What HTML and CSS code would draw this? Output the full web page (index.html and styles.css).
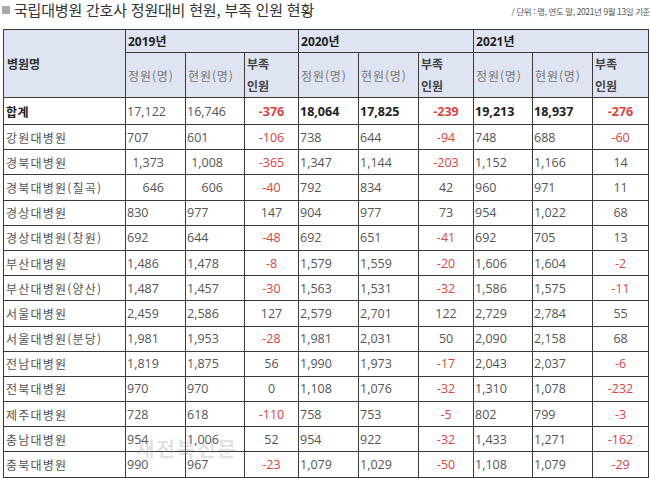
FILE: index.html
```html
<!DOCTYPE html>
<html lang="ko">
<head>
<meta charset="utf-8">
<link rel="stylesheet" href="styles.css">
</head>
<body>
<div class="page">
  <div class="top">
    <h1 class="title"><span class="sq"></span>국립대병원 간호사 정원대비 현원, 부족 인원 현황</h1>
    <span class="note">/ 단위 : 명, 연도 말, 2021년 9월 13일 기준</span>
  </div>
  <table class="tbl">
    <colgroup>
      <col class="w-name"><col class="w60"><col class="w59"><col class="w54"><col class="w60"><col class="w60"><col class="w55"><col class="w59"><col class="w60"><col class="w56">
    </colgroup>
    <thead>
      <tr class="h1">
        <th rowspan="2" class="hname">병원명</th>
        <th colspan="3" class="year">2019년</th>
        <th colspan="3" class="year">2020년</th>
        <th colspan="3" class="year">2021년</th>
      </tr>
      <tr class="h2">
        <th class="sub">정원(명)</th><th class="sub">현원(명)</th><th class="lack">부족<br>인원</th>
        <th class="sub">정원(명)</th><th class="sub">현원(명)</th><th class="lack">부족<br>인원</th>
        <th class="sub">정원(명)</th><th class="sub">현원(명)</th><th class="lack">부족<br>인원</th>
      </tr>
    </thead>
    <tbody>
      <tr class="total">
        <td class="name b">합계</td><td class="l">17,122</td><td class="l">16,746</td><td class="c neg b">-376</td>
        <td class="l b">18,064</td><td class="l b">17,825</td><td class="c neg b">-239</td>
        <td class="l b">19,213</td><td class="l b">18,937</td><td class="c neg b">-276</td>
      </tr>
      <tr><td class="name">강원대병원</td><td class="l">707</td><td class="l">601</td><td class="c neg">-106</td><td class="l">738</td><td class="l">644</td><td class="c neg">-94</td><td class="l">748</td><td class="l">688</td><td class="c neg">-60</td></tr>
      <tr><td class="name">경북대병원</td><td class="r">1,373</td><td class="r">1,008</td><td class="c neg">-365</td><td class="l">1,347</td><td class="l">1,144</td><td class="c neg">-203</td><td class="l">1,152</td><td class="l">1,166</td><td class="c">14</td></tr>
      <tr><td class="name">경북대병원(칠곡)</td><td class="r">646</td><td class="r">606</td><td class="c neg">-40</td><td class="l">792</td><td class="l">834</td><td class="c">42</td><td class="l">960</td><td class="l">971</td><td class="c">11</td></tr>
      <tr><td class="name">경상대병원</td><td class="l">830</td><td class="l">977</td><td class="c">147</td><td class="l">904</td><td class="l">977</td><td class="c">73</td><td class="l">954</td><td class="l">1,022</td><td class="c">68</td></tr>
      <tr><td class="name">경상대병원(창원)</td><td class="l">692</td><td class="l">644</td><td class="c neg">-48</td><td class="l">692</td><td class="l">651</td><td class="c neg">-41</td><td class="l">692</td><td class="l">705</td><td class="c">13</td></tr>
      <tr><td class="name">부산대병원</td><td class="l">1,486</td><td class="l">1,478</td><td class="c neg">-8</td><td class="l">1,579</td><td class="l">1,559</td><td class="c neg">-20</td><td class="l">1,606</td><td class="l">1,604</td><td class="c neg">-2</td></tr>
      <tr><td class="name">부산대병원(양산)</td><td class="l">1,487</td><td class="l">1,457</td><td class="c neg">-30</td><td class="l">1,563</td><td class="l">1,531</td><td class="c neg">-32</td><td class="l">1,586</td><td class="l">1,575</td><td class="c neg">-11</td></tr>
      <tr><td class="name">서울대병원</td><td class="l">2,459</td><td class="l">2,586</td><td class="c">127</td><td class="l">2,579</td><td class="l">2,701</td><td class="c">122</td><td class="l">2,729</td><td class="l">2,784</td><td class="c">55</td></tr>
      <tr><td class="name">서울대병원(분당)</td><td class="l">1,981</td><td class="l">1,953</td><td class="c neg">-28</td><td class="l">1,981</td><td class="l">2,031</td><td class="c">50</td><td class="l">2,090</td><td class="l">2,158</td><td class="c">68</td></tr>
      <tr><td class="name">전남대병원</td><td class="l">1,819</td><td class="l">1,875</td><td class="c">56</td><td class="l">1,990</td><td class="l">1,973</td><td class="c neg">-17</td><td class="l">2,043</td><td class="l">2,037</td><td class="c neg">-6</td></tr>
      <tr><td class="name">전북대병원</td><td class="l">970</td><td class="l">970</td><td class="c">0</td><td class="l">1,108</td><td class="l">1,076</td><td class="c neg">-32</td><td class="l">1,310</td><td class="l">1,078</td><td class="c neg">-232</td></tr>
      <tr><td class="name">제주대병원</td><td class="l">728</td><td class="l">618</td><td class="c neg">-110</td><td class="l">758</td><td class="l">753</td><td class="c neg">-5</td><td class="l">802</td><td class="l">799</td><td class="c neg">-3</td></tr>
      <tr><td class="name">충남대병원</td><td class="l">954</td><td class="l">1,006</td><td class="c">52</td><td class="l">954</td><td class="l">922</td><td class="c neg">-32</td><td class="l">1,433</td><td class="l">1,271</td><td class="c neg">-162</td></tr>
      <tr><td class="name">충북대병원</td><td class="l">990</td><td class="l">967</td><td class="c neg">-23</td><td class="l">1,079</td><td class="l">1,029</td><td class="c neg">-50</td><td class="l">1,108</td><td class="l">1,079</td><td class="c neg">-29</td></tr>
    </tbody>
  </table>
  <div class="watermark" aria-hidden="true">새전북신문</div>
</div>
</body>
</html>
```
FILE: styles.css
```css
html, body {
  margin: 0;
  padding: 0;
  background: #ffffff;
}
.page {
  position: relative;
  width: 650px;
  height: 478px;
  overflow: hidden;
  font-family: "Open Sans", "Noto Sans CJK KR", sans-serif;
}
.top {
  height: 29px;
  display: flex;
  justify-content: space-between;
  align-items: flex-start;
}
.title {
  margin: 0;
  padding-left: 2px;
  font-family: "Noto Sans CJK KR", sans-serif;
  font-weight: 400;
  font-size: 15px;
  line-height: 20px;
  color: #333;
  display: flex;
  align-items: center;
  gap: 4px;
  letter-spacing: -0.2px;
}
.sq {
  display: inline-block;
  width: 8px;
  height: 8px;
  background: #a9a9a9;
}
.note {
  margin-top: 5px;
  font-family: "Noto Sans CJK KR", sans-serif;
  font-size: 8.5px;
  line-height: 12px;
  color: #555;
  letter-spacing: -0.4px;
  white-space: nowrap;
}
.tbl {
  margin-left: 3px;
  width: 645px;
  table-layout: fixed;
  border-collapse: collapse;
  border: 1px solid #333;
}
.w-name { width: 122px; }
.w60 { width: 60px; }
.w59 { width: 59px; }
.w56 { width: 56px; }
.w55 { width: 55px; }
.w54 { width: 54px; }
.tbl th, .tbl td {
  border: 1px solid #3a3a3a;
  padding: 0;
  white-space: nowrap;
  overflow: hidden;
}
.tbl th {
  background: #dee4f2;
  text-align: left;
  vertical-align: middle;
  font-size: 12px;
}
.h1 th { height: 22px; }
.h2 th { height: 44px; }
.hname {
  padding-left: 3px !important;
  font-family: "Noto Sans CJK KR", sans-serif;
  font-weight: 700;
  color: #333;
  font-size: 12.5px;
}
.year {
  padding-left: 2px !important;
  font-weight: 700;
  color: #222;
  font-size: 12.5px;
}
.sub {
  padding-left: 2px !important;
  font-family: "Noto Sans CJK KR", sans-serif;
  font-weight: 400;
  color: #777;
  font-size: 12px;
  letter-spacing: 0.9px;
}
.lack {
  padding-left: 2px !important;
  font-family: "Noto Sans CJK KR", sans-serif;
  font-weight: 700;
  color: #444;
  font-size: 12.5px;
  line-height: 22px;
}
.tbl td {
  height: 24.2px;
  font-size: 12.5px;
  color: #555;
  vertical-align: middle;
}
.tbl tr.total td {
  height: 26px;
}
.name {
  padding-left: 2px !important;
  font-family: "Noto Sans CJK KR", sans-serif;
  font-size: 12px !important;
  letter-spacing: 1.2px;
  color: #555 !important;
}
.total .name {
  color: #222 !important;
  font-weight: 700;
  letter-spacing: 0.5px;
}
.l { text-align: left; padding-left: 1px !important; }
.c { text-align: center; }
.r { text-align: right; padding-right: 21px !important; }
.b { font-weight: 700; color: #222 !important; }
.neg { color: #e0423f !important; }
.watermark {
  position: absolute;
  left: 136px;
  top: 437px;
  font-family: "Noto Sans CJK KR", sans-serif;
  font-weight: 700;
  font-size: 20px;
  line-height: 24px;
  letter-spacing: 2px;
  color: rgba(150, 150, 150, 0.28);
  pointer-events: none;
}
```
